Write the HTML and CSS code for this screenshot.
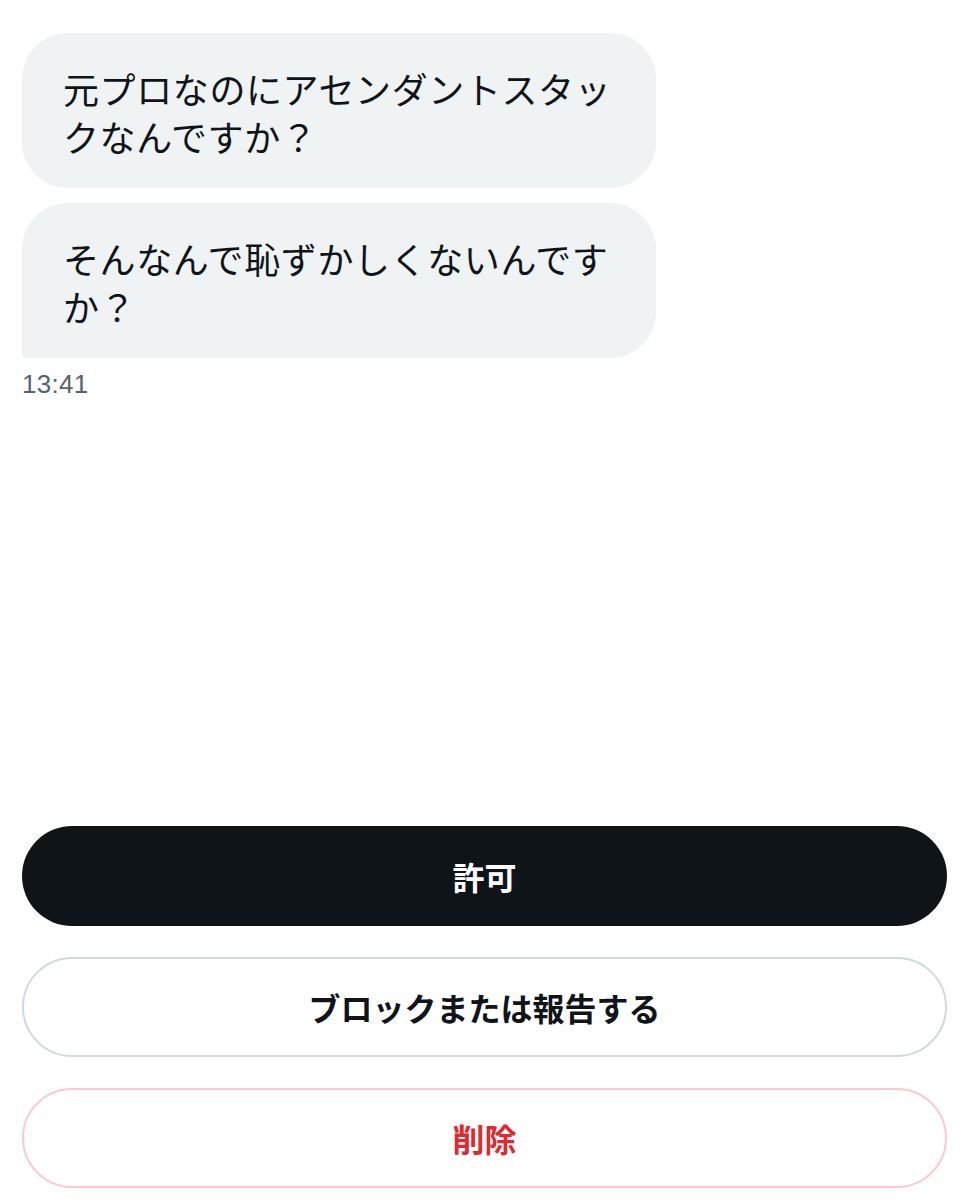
FILE: index.html
```html
<!DOCTYPE html>
<html lang="ja">
<head>
    <meta charset="UTF-8">
    <meta name="viewport" content="width=device-width, initial-scale=1.0">
    <title>メッセージリクエスト</title>
    <link rel="stylesheet" href="styles.css">
</head>
<body>

    <div class="pantalla">
        <!-- Mensajes recibidos -->
        <section class="mensajes">
            <div class="burbuja">元プロなのにアセンダントスタックなんですか？</div>
            <div class="burbuja ultima">そんなんで恥ずかしくないんですか？</div>
            <p class="hora">13:41</p>
        </section>

        <!-- Acciones de la solicitud -->
        <div class="acciones">
            <button class="boton boton-permitir">許可</button>
            <button class="boton boton-bloquear">ブロックまたは報告する</button>
            <button class="boton boton-eliminar">削除</button>
        </div>
    </div>

</body>
</html>
```

FILE: styles.css
```css
body {
    margin: 0;
    padding: 0;
    background-color: #ffffff;
    color: #0f1419;
    font-family: "Liberation Sans", "Noto Sans CJK JP", sans-serif;
}

.pantalla {
    display: flex;
    flex-direction: column;
    height: 1200px;
    box-sizing: border-box;
    padding: 33px 23px 12px 22px;
}

.mensajes {
    display: flex;
    flex-direction: column;
    gap: 15px;
}

.burbuja {
    width: 634px;
    box-sizing: border-box;
    padding: 31px 41px 28px 41px;
    background-color: #eff3f4;
    border-radius: 46px;
    font-family: "Noto Sans CJK JP", sans-serif;
    font-size: 36px;
    line-height: 48px;
    letter-spacing: 0.6px;
}

.burbuja.ultima {
    border-bottom-left-radius: 4px;
}

.hora {
    margin: -4px 0 0 0;
    font-size: 26px;
    line-height: 30px;
    letter-spacing: 0.3px;
    color: #536471;
}

.acciones {
    margin-top: auto;
    display: flex;
    flex-direction: column;
    gap: 31px;
}

.boton {
    height: 100px;
    border-radius: 50px;
    font-family: "Noto Sans CJK JP", sans-serif;
    font-size: 32px;
    font-weight: bold;
    cursor: pointer;
    background-color: #ffffff;
}

.boton-permitir {
    background-color: #0f1419;
    color: #ffffff;
    border: none;
}

.boton-bloquear {
    border: 2px solid #cfd9de;
    color: #0f1419;
}

.boton-eliminar {
    border: 2px solid #fdc9ce;
    color: #e0282e;
}
```
